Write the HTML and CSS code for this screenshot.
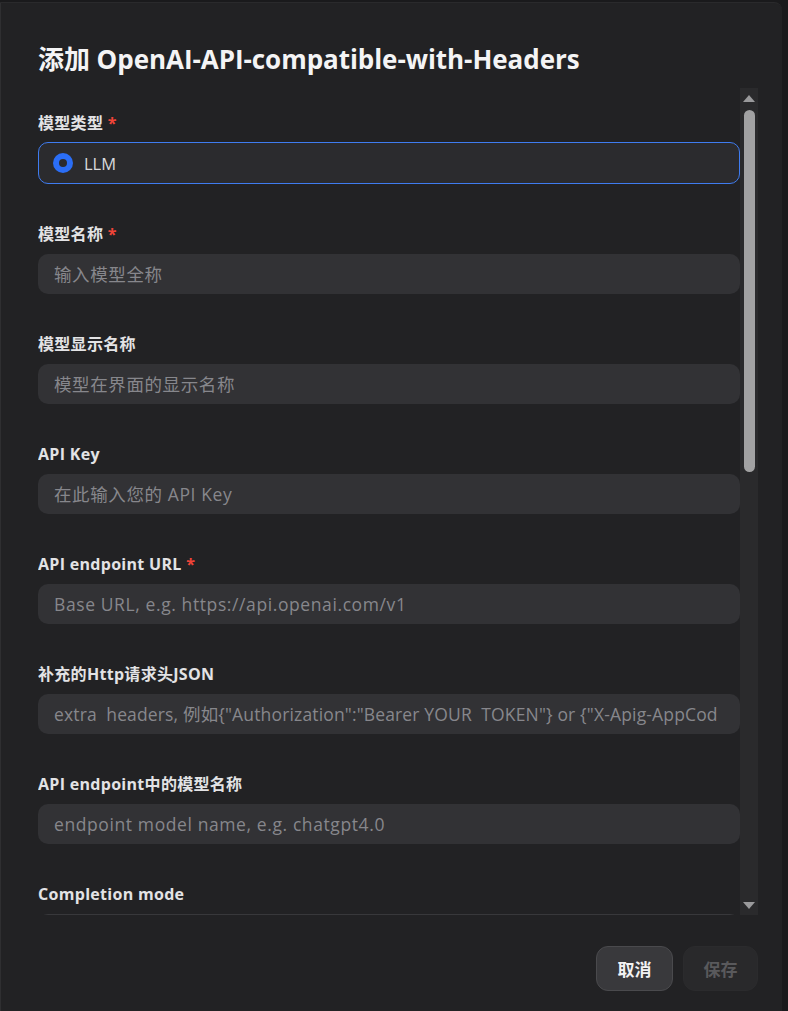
FILE: index.html
```html
<!DOCTYPE html>
<html lang="zh">
<head>
<meta charset="utf-8">
<title>添加 OpenAI-API-compatible-with-Headers</title>
<link rel="stylesheet" href="styles.css">
</head>
<body>
<div class="modal">
  <h1 class="title">添加 OpenAI-API-compatible-with-Headers</h1>
  <div class="body-wrap">
    <div class="scroll">
      <div class="field field-radio">
        <div class="label">模型类型 <span class="req">*</span></div>
        <div class="radio-box">
          <span class="radio"><span class="radio-dot"></span></span>
          <span class="radio-text">LLM</span>
        </div>
      </div>
      <div class="field">
        <div class="label">模型名称 <span class="req">*</span></div>
        <div class="input"><span class="placeholder">输入模型全称</span></div>
      </div>
      <div class="field">
        <div class="label">模型显示名称</div>
        <div class="input"><span class="placeholder">模型在界面的显示名称</span></div>
      </div>
      <div class="field">
        <div class="label">API Key</div>
        <div class="input"><span class="placeholder">在此输入您的 API Key</span></div>
      </div>
      <div class="field">
        <div class="label">API endpoint URL <span class="req">*</span></div>
        <div class="input"><span class="placeholder">Base URL, e.g. https://api.openai.com/v1</span></div>
      </div>
      <div class="field">
        <div class="label">补充的Http请求头JSON</div>
        <div class="input"><span class="placeholder placeholder-tight">extra&nbsp; headers, 例如{"Authorization":"Bearer YOUR&nbsp; TOKEN"} or {"X-Apig-AppCod</span></div>
      </div>
      <div class="field">
        <div class="label">API endpoint中的模型名称</div>
        <div class="input"><span class="placeholder">endpoint model name, e.g. chatgpt4.0</span></div>
      </div>
      <div class="field">
        <div class="label">Completion mode</div>
        <div class="select-box"></div>
      </div>
    </div>
    <div class="scrollbar">
      <div class="arrow arrow-up"></div>
      <div class="thumb"></div>
      <div class="track-rest"></div>
      <div class="arrow arrow-down"></div>
    </div>
  </div>
  <div class="footer">
    <button class="btn btn-cancel">取消</button>
    <button class="btn btn-save">保存</button>
  </div>
</div>
</body>
</html>
```
FILE: styles.css
```css
html, body {
  margin: 0;
  padding: 0;
  background: #1a1a1c;
  height: 100%;
  overflow: hidden;
}
body {
  font-family: "Open Sans", "Noto Sans CJK SC", sans-serif;
  color: #e6e6e8;
}
.modal {
  box-sizing: border-box;
  margin-top: 2px;
  width: 782px;
  height: 1009px;
  background: #222224;
  border-left: 1px solid #2f2f31;
  border-top: 1px solid #2a2a2c;
  border-top-right-radius: 8px;
  padding: 40px 24px 0 37px;
  display: flex;
  flex-direction: column;
}
.title {
  margin: 0;
  font-size: 26px;
  line-height: 32px;
  font-weight: 700;
  color: #f4f4f5;
  white-space: nowrap;
  letter-spacing: -0.05px;
}
.body-wrap {
  margin-top: 13px;
  height: 827px;
  display: flex;
  flex-direction: row;
}
.scroll {
  flex: 1;
  min-width: 0;
  overflow: hidden;
  padding-top: 25px;
}
.field {
  margin-bottom: 40px;
}
.label {
  font-size: 16px;
  line-height: 20px;
  font-weight: 700;
  letter-spacing: 0.3px;
  color: #e3e3e5;
  margin-bottom: 10px;
  white-space: nowrap;
}
.field-radio .label {
  margin-bottom: 9px;
}
.req {
  color: #f04438;
}
.radio-box {
  box-sizing: border-box;
  height: 42px;
  border: 1px solid #3f7cf0;
  border-radius: 10px;
  background: #2b2b2e;
  display: flex;
  align-items: center;
  padding-left: 14px;
  gap: 11px;
}
.radio {
  width: 20px;
  height: 20px;
  border-radius: 50%;
  background: #2b6ef6;
  display: flex;
  align-items: center;
  justify-content: center;
}
.radio-dot {
  width: 8px;
  height: 8px;
  border-radius: 50%;
  background: #2b2b2e;
}
.radio-text {
  font-size: 16.5px;
  color: #d9d9dc;
}
.input {
  box-sizing: border-box;
  height: 40px;
  border-radius: 10px;
  background: #323235;
  padding: 0 16px;
  display: flex;
  align-items: center;
}
.placeholder {
  flex: 1;
  min-width: 0;
  overflow: hidden;
  white-space: nowrap;
  font-size: 17.5px;
  letter-spacing: 0.6px;
  line-height: 40px;
  color: #87878c;
}
.placeholder-tight {
  letter-spacing: 0.15px;
}
.select-box {
  box-sizing: border-box;
  height: 40px;
  border: 1px solid #38383b;
  border-radius: 10px;
  background: #222224;
}
.scrollbar {
  width: 18px;
  background: #2a2a2c;
  display: flex;
  flex-direction: column;
  align-items: center;
}
.arrow {
  width: 0;
  height: 0;
  border-left: 6px solid transparent;
  border-right: 6px solid transparent;
}
.arrow-up {
  margin-top: 7px;
  border-bottom: 7px solid #9a9a9c;
}
.arrow-down {
  margin-bottom: 6px;
  border-top: 7px solid #9a9a9c;
}
.thumb {
  margin-top: 8px;
  width: 11px;
  height: 362px;
  border-radius: 6px;
  background: #a2a2a3;
}
.track-rest {
  flex: 1;
}
.footer {
  margin-top: 31px;
  display: flex;
  justify-content: flex-end;
  gap: 10px;
}
.btn {
  box-sizing: border-box;
  height: 45px;
  border-radius: 12px;
  font-family: "Noto Sans CJK SC", sans-serif;
  font-size: 17px;
  font-weight: 700;
  padding: 0;
}
.btn-cancel {
  width: 77px;
  background: #39393c;
  border: 1px solid #4a4a4d;
  color: #f2f2f3;
}
.btn-save {
  width: 75px;
  background: #29292b;
  border: 1px solid #2b2b2d;
  color: #59595c;
}
```
